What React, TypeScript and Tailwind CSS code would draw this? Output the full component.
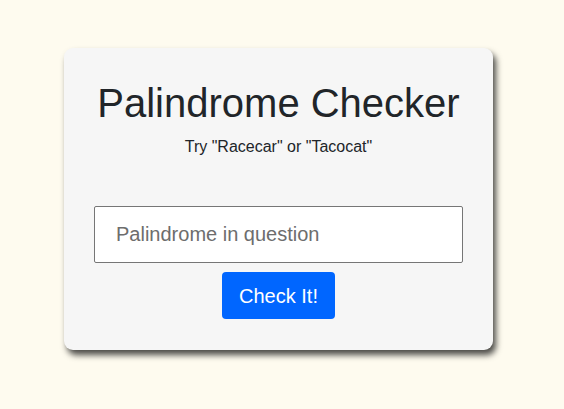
import React from "react";

export default function App() {
  return (
    <div className="min-h-[409px] w-full bg-[#fefbef] pt-[48px] pl-[64px]" style={{ fontFamily: '"Liberation Sans", Arial, sans-serif' }}>
      <div className="w-[429px] h-[302px] rounded-[9px] bg-[#f6f6f6] shadow-[3px_5px_6px_rgba(0,0,0,0.7)] px-[30px] pt-[30px] flex flex-col items-center">
        <h1 className="text-[40px] leading-[48px] pt-[1px] text-[#212529] text-center whitespace-nowrap">Palindrome Checker</h1>
        <p className="mt-[8px] text-[16px] leading-[24px] text-[#212529] text-center">Try "Racecar" or "Tacocat"</p>
        <input
          type="text"
          placeholder="Palindrome in question"
          className="mt-[47px] w-[369px] h-[57px] border border-[#767676] rounded-[2px] bg-white px-[21px] text-[20px] text-[#212529] placeholder:text-[#6d6d6d] outline-none"
        />
        <button className="mt-[9px] w-[113px] h-[47px] rounded-[4px] bg-[#0066ff] text-white text-[20px]">Check It!</button>
      </div>
    </div>
  );
}
